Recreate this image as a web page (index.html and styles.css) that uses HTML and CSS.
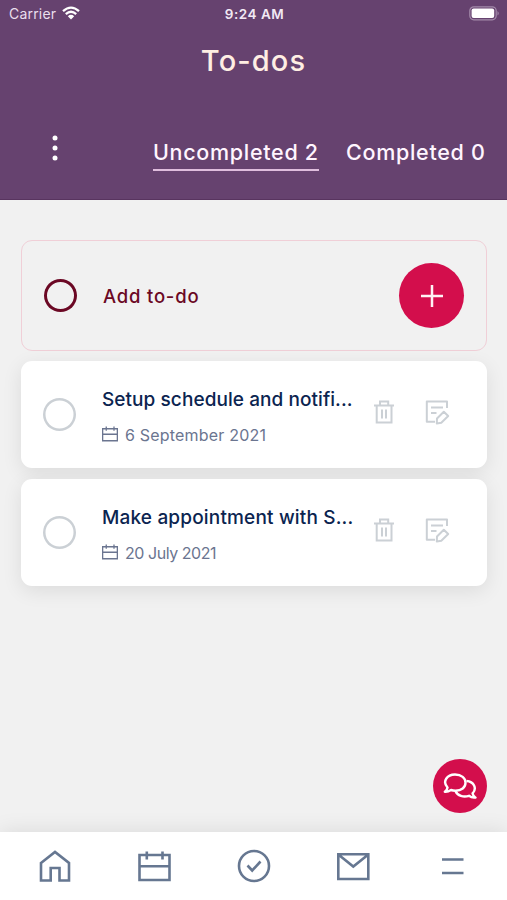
FILE: index.html
```html
<!DOCTYPE html>
<html lang="en">
<head>
<meta charset="utf-8">
<title>To-dos</title>
<link rel="stylesheet" href="styles.css">
</head>
<body>
<svg class="sprite" aria-hidden="true">
  <symbol id="calendar" viewBox="0 0 32 30"><path d="M1.300 4.500H30.700V28.500H1.300ZM1 15.500H31M8.500 0V8.500M24 0V8.500" fill="none" stroke="currentColor" stroke-width="2.600"/></symbol>
  <symbol id="trash" viewBox="0 0 20 24"><path d="M0 5.500H20M2.700 6V22.500H17.500V6M6 5V1.500H14.200V5M8 9.500V18.500M12 9.500V18.500" fill="none" stroke="currentColor" stroke-width="2"/></symbol>
  <symbol id="edit" viewBox="0 0 25 25"><path d="M10 21.700H1.800V1.500H22V8M6 7.500H18M6 13H11.500M11.800 23.400L12 18.500L18.800 11.700L23.200 16L16.300 22.700Z" fill="none" stroke="currentColor" stroke-width="2" stroke-linejoin="round"/></symbol>
</svg>
<header class="header">
  <div class="status">
    <div class="carrier"><span class="carrier-name">Carrier</span>
      <svg class="wifi" viewBox="0 0 18 14"><path d="M1 5.200Q9-2 17 5.200M3.800 8.100Q9 3.500 14.200 8.100" fill="none" stroke="#fff" stroke-width="2.300"/><path d="M5.800 10.200Q9 7.400 12.200 10.200L9 13.500Z" fill="#fff"/></svg>
    </div>
    <span class="time">9:24 AM</span>
    <svg class="battery" viewBox="0 0 31 15"><rect x=".8" y=".8" width="26.400" height="13" rx="4" fill="none" stroke="#a38aaa" stroke-width="1.200"/><rect x="2.600" y="2.600" width="22.600" height="9.400" rx="2" fill="#fff"/><path d="M28.500 5Q31 7.300 28.500 9.600Z" fill="#a38aaa"/></svg>
  </div>
  <h1 class="title">To-dos</h1>
  <div class="filters">
    <svg class="more" viewBox="0 0 6 26"><circle cx="3" cy="3" r="2.500" fill="#fff"/><circle cx="3" cy="13" r="2.500" fill="#fff"/><circle cx="3" cy="23" r="2.500" fill="#fff"/></svg>
    <nav class="tabs"><span class="tab tab-first active">Uncompleted 2</span><span class="tab tab-second">Completed 0</span></nav>
  </div>
</header>
<main class="list">
  <section class="add">
    <span class="ring ring-add"></span><span class="add-label">Add to-do</span>
    <button class="plus" aria-label="Add"><svg viewBox="0 0 22 22"><path d="M11 0V22M0 11H22" stroke="#fff3f5" stroke-width="2.500"/></svg></button>
  </section>
  <article class="card">
    <span class="ring"></span>
    <div class="info"><h2 class="name name-setup">Setup schedule and notifi...</h2><div class="date"><svg><use href="#calendar"/></svg><span class="date-sep">6 September 2021</span></div></div>
    <svg class="trash"><use href="#trash"/></svg><svg class="edit"><use href="#edit"/></svg>
  </article>
  <article class="card">
    <span class="ring"></span>
    <div class="info"><h2 class="name name-make">Make appointment with S...</h2><div class="date"><svg><use href="#calendar"/></svg><span class="date-jul">20 July 2021</span></div></div>
    <svg class="trash"><use href="#trash"/></svg><svg class="edit"><use href="#edit"/></svg>
  </article>
</main>
<button class="chat" aria-label="Chat"><svg viewBox="0 0 34 27"><g fill="none" stroke="#fff" stroke-width="2.400" stroke-linejoin="round"><path d="M4.500 14.500C-1 8.500 4 1.500 12 1.500C18.500 1.500 22.500 5 22.500 9.700C22.500 14.500 18.500 17.700 12.500 17.700Q10 17.700 8 17Q5 19 1.800 18.700Q4.200 17.200 4.500 14.500Z"/><path d="M23.500 8C31 8.500 34.200 15.500 29.600 20.400Q30.200 23.500 32.500 24.500Q29 25.200 26 22.800C20.500 24.500 14.500 23 12.500 18"/></g></svg></button>
<footer class="nav">
  <svg viewBox="0 0 34 34"><path d="M3 14L17 3L31 14V31.500H21.500V19H12.700V31.500H3Z"/></svg>
  <svg viewBox="0 0 34 34"><path d="M1.500 6H31.500V31H1.500ZM1.500 17.300H31.500M8.800 2.500V10.500M24.500 2.500V10.500"/></svg>
  <svg viewBox="0 0 34 34"><circle cx="17" cy="17" r="15"/><path d="M10.500 16.500L15.200 21.500L23.500 12.500"/></svg>
  <svg viewBox="0 0 34 34"><path d="M1.300 5.200H31.300V30H1.300ZM1.300 5.500L16.300 17.500L31.300 5.500"/></svg>
  <svg viewBox="0 0 34 34"><path d="M6 10.500H27.500M6 24H27.500"/></svg>
</footer>
</body>
</html>
```
FILE: styles.css
```css
* { box-sizing: border-box; }
body { margin: 0; height: 900px; overflow: hidden; display: flex; flex-direction: column; background: #f1f1f1; font-family: Inter, "Open Sans", sans-serif; }
h1, h2 { margin: 0; }
button { border: 0; padding: 0; display: grid; place-items: center; border-radius: 50%; background: #d30e4c; }
.sprite { display: none; }
.header { height: 200px; background: #66426f; border-bottom: 1px solid #58345f; color: #fff; }
.status { height: 28px; padding: 0 7px 0 9px; display: grid; grid-template-columns: 1fr auto 1fr; align-items: center; }
.carrier { display: flex; align-items: center; gap: 6px; font-size: 14px; color: #eadfed; letter-spacing: .2px; }
.carrier-name { margin-top: -1px; }
.wifi { width: 18px; height: 14px; margin-top: -2px; }
.time { font-size: 13.500px; font-weight: 600; color: #f2e9f4; letter-spacing: .5px; }
.battery { width: 31px; height: 15px; justify-self: end; margin-top: -2px; }
.title { height: 64px; text-align: center; font-size: 29px; line-height: 66px; font-weight: 500; color: #ffeee3; letter-spacing: 1.100px; }
.filters { height: 108px; display: flex; justify-content: space-between; padding: 42px 21px 0 52px; }
.more { width: 6px; height: 26px; margin-top: 1px; }
.tabs { display: flex; gap: 27px; }
.tab { height: 37px; line-height: 36px; white-space: nowrap; font-size: 21.500px; font-weight: 500; color: #fff5ff; letter-spacing: .7px; }
.tab-first { width: 166px; }
.tab-second { width: 140px; }
.active { border-bottom: 2px solid #dfbddd; }
.list { padding: 40px 20px 0 21px; display: flex; flex-direction: column; }
.add { height: 111px; display: flex; align-items: center; border: 1.500px solid #f0cfd7; border-radius: 11px; padding: 0 22px 0 22px; margin-bottom: 10px; }
.ring { width: 33px; height: 33px; flex: none; box-shadow: inset 0 0 0 2.500px #cbd0d5; border-radius: 50%; }
.ring-add { box-shadow: inset 0 0 0 3px #6b0824; }
.add-label { flex: 1; padding-left: 26px; font-size: 18.500px; font-weight: 500; color: #6b0824; letter-spacing: .8px; }
.plus { width: 65px; height: 65px; }
.plus svg { width: 22px; height: 22px; }
.card { height: 107px; display: flex; background: #fff; border-radius: 11px; margin-bottom: 11px; padding: 0 36px 0 22px; box-shadow: 0 5px 20px rgba(0,0,0,.09); align-items: center; }
.info { width: 272px; padding: 4px 0 0 26px; }
.name { white-space: nowrap; font-size: 19px; line-height: 32px; font-weight: 500; color: #0b2450; }
.name-setup { letter-spacing: .070px; }
.name-make { letter-spacing: .170px; }
.date { height: 30px; margin-top: 4px; display: flex; align-items: center; gap: 7px; color: #6b7590; font-size: 16px; white-space: nowrap; }
.date svg { width: 16px; height: 16px; margin-top: -2px; color: #6b7590; }
.date-sep { letter-spacing: .200px; }
.date-jul { letter-spacing: -.450px; }
.trash { width: 20px; height: 24px; margin: -5px 31px 0 26px; color: #cbd0d5; }
.edit { width: 25px; height: 25px; margin-top: -5px; color: #cbd0d5; }
.chat { position: absolute; left: 433px; top: 759px; width: 54px; height: 54px; }
.chat svg { width: 34px; height: 27px; }
.nav { height: 68px; margin-top: auto; background: #fff; display: grid; grid-template-columns: repeat(5, 34px); justify-content: space-between; padding: 17px 37px 0 38px; box-shadow: 0 0 22px rgba(0,0,0,.1); }
.nav svg { width: 34px; height: 34px; fill: none; stroke: #667791; stroke-width: 2.600; }
```
